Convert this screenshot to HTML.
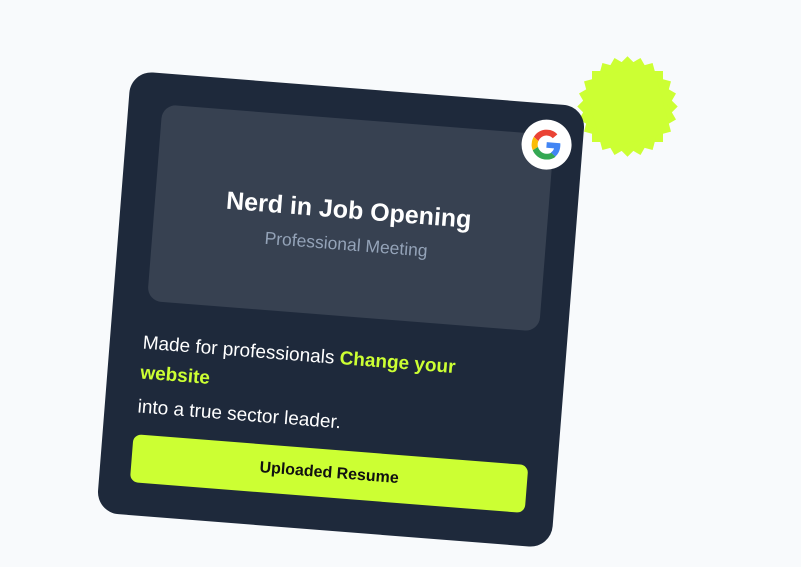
<!DOCTYPE html>
<html><head><style>
html,body{margin:0;padding:0;width:801px;height:567px;background:#f8fafc;overflow:hidden;font-family:"Liberation Sans",Arial,sans-serif}
.star{position:absolute;left:627px;top:106px}
.star div{position:absolute;width:71px;height:71px;left:-35.5px;top:-35.5px;background:#ccff33}
.card{position:absolute;left:113px;top:88px;width:456px;height:443px;background:#1e293b;border-radius:22px;transform:rotate(4.5deg);transform-origin:center}
.panel{position:absolute;left:34px;top:31px;width:393px;height:197px;background:#374151;border-radius:14px}
.g{position:absolute;left:395px;top:16px;width:50px;height:50px;border-radius:50%;background:#fff;display:flex;align-items:center;justify-content:center}
.t{position:absolute;left:0;width:456px;text-align:center;color:#fff}
.p{position:absolute;left:33px;color:#fff;font-size:19px;margin:0;line-height:30px;width:330px}
.btn{position:absolute;left:31px;top:362px;width:396px;height:48px;background:#ccff33;border-radius:8px;display:flex;align-items:center;justify-content:center;font-weight:bold;font-size:16px;color:#111}
</style></head><body>
<div class="star"><div style="transform:rotate(0deg)"></div><div style="transform:rotate(15deg)"></div><div style="transform:rotate(30deg)"></div><div style="transform:rotate(45deg)"></div><div style="transform:rotate(60deg)"></div><div style="transform:rotate(75deg)"></div></div>
<div class="card">
<div class="panel"></div>
<div class="g"><svg width="30" height="30" viewBox="0 0 48 48"><path fill="#EA4335" d="M24 9.5c3.5 0 6.6 1.2 9.1 3.6l6.8-6.8C35.8 2.5 30.3 0 24 0 14.6 0 6.6 5.4 2.7 13.3l7.9 6.1C12.5 13.6 17.8 9.5 24 9.5z"/><path fill="#4285F4" d="M46.1 24.6c0-1.6-.1-3.1-.4-4.6H24v9h12.4c-.5 2.9-2.2 5.4-4.7 7l7.6 5.9c4.4-4.1 6.8-10.1 6.8-17.3z"/><path fill="#FBBC05" d="M10.5 28.6c-.5-1.4-.8-3-.8-4.6s.3-3.2.8-4.6l-7.9-6.1C1 16.6 0 20.2 0 24s1 7.4 2.7 10.7l7.8-6.1z"/><path fill="#34A853" d="M24 48c6.5 0 11.9-2.1 15.9-5.8l-7.6-5.9c-2.2 1.5-4.9 2.3-8.3 2.3-6.2 0-11.5-4.2-13.4-9.9l-7.9 6.1C6.6 42.6 14.6 48 24 48z"/></svg></div>
<div class="t" style="top:108px;font-size:25px;font-weight:bold">Nerd in Job Opening</div>
<div class="t" style="top:146px;font-size:17.5px;color:#94a3b8">Professional Meeting</div>
<p class="p" style="top:256px">Made for professionals <b style="color:#ccff33">Change your website</b></p>
<p class="p" style="top:320px">into a true sector leader.</p>
<div class="btn">Uploaded Resume</div>
</div>
</body></html>
